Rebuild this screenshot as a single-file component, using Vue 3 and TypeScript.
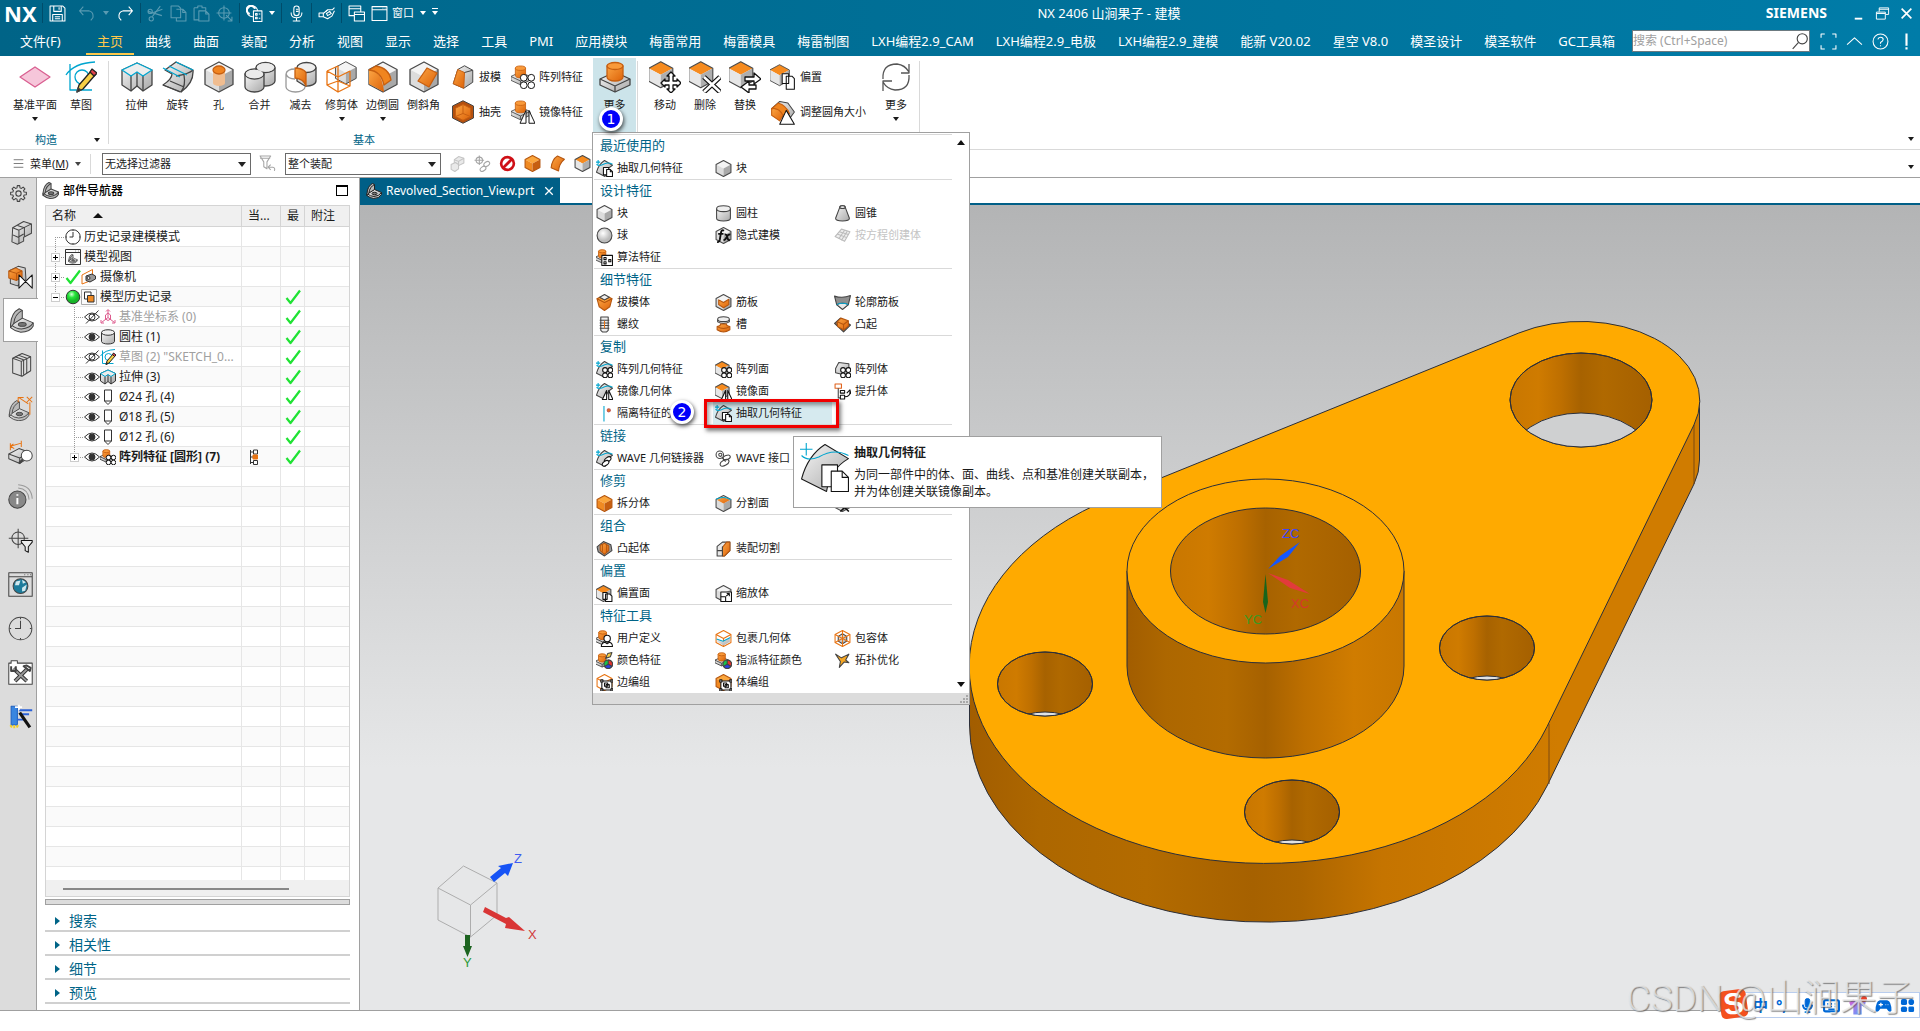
<script setup lang="ts">
import { h, ref } from 'vue'

/* ---------- icon drawing helpers (32 x 32 grid) ---------- */
const O = 'url(#orange)'
const G = 'url(#grey)'
const cube = (top: string, left: string, right: string, line = '#4a4a4a'): string =>
  `<g stroke="none"><path d="M16 1 30 8.500 16 16 2 8.500Z" fill="${top}"/><path d="M2 8.500 16 16V31L2 23.500Z" fill="${left}"/><path d="M30 8.500 16 16V31L30 23.500Z" fill="${right}"/></g>` +
  `<path d="M16 1 30 8.500V23.500L16 31 2 23.500V8.500Z" stroke="${line}"/>`
const at = (x: number, y: number, k: number, body: string): string =>
  `<g transform="translate(${x} ${y}) scale(${k})">${body}</g>`
const greyCube = cube('#f4f4f4', '#dcdcdc', '#a9a9a9')
const topCube = cube('#f68b1f', '#e6e6e6', '#aeaeae')
const solidCube = cube('#fba63c', '#f08a22', '#c75f10', '#b5560f')
const pad =
  `<path d="M1 18 16 11 31 18V24L16 31 1 24Z" fill="${G}"/><path d="M1 18 16 25 31 18M16 25V31"/>` +
  `<path d="M8 5V16a8 4 0 0 0 16 0V5Z" fill="${O}" stroke="#c75f10"/><ellipse cx="16" cy="5" rx="8" ry="3.500" fill="#f99a3a" stroke="#c75f10"/>`
const surf =
  `<path d="M1 23Q5 8 16 1L31 10Q19 17 17 31Z" fill="${G}"/><path d="M1 8Q5 12 12 9 22 3 31 8" stroke="#00a5cf"/><path d="M4 0V8M0 4H8" stroke="#00a5cf"/>`
const four =
  '<g fill="#fff" stroke="#111"><circle cx="17" cy="17" r="4.500"/><circle cx="27" cy="17" r="4.500"/><circle cx="17" cy="27" r="4.500"/><circle cx="27" cy="27" r="4.500"/></g>'
const mirror = '<path d="M20 14V31H12ZM24 14V31H32Z" fill="#fff" stroke="#111"/>'
const pages = '<path d="M14 14h10v14h-10z" fill="#fff" stroke="#111"/><path d="M20 18h7l4 4v9H20Z" fill="#fff" stroke="#111"/><path d="M27 18v4h4" stroke="#111"/>'
const cyl = (f: string): string => `<path d="M3 7V25a13 5 0 0 0 26 0V7" fill="${f}"/><ellipse cx="16" cy="7" rx="13" ry="5.500" fill="#eee"/>`
const bracket =
  `<path d="M2 21 17 13 31 19V23Q27 31 15 31 8 30 2 25Z" fill="${G}"/><path d="M2 21Q9 27 16 27 27 26 31 19"/>` +
  `<ellipse cx="17" cy="21" rx="5" ry="2.500" fill="#777"/><path d="M2 21Q3 6 13 1L17 3V13L6 20 2 25Z" fill="#b9b9b9"/><path d="M17 3Q7 8 6 20"/>`
const rgb = '<circle cx="23" cy="23" r="8" fill="#19c24a"/><path d="M23 23V15A8 8 0 0 1 30 27Z" fill="#e5322d"/><path d="M23 23 30 27A8 8 0 0 1 16 27Z" fill="#2b3fe0"/>'
const hexWire = `<path d="M16 1 30 8.500V23.500L16 31 2 23.500V8.500Z" stroke="#e87311"/><path d="M2 8.500 16 16 30 8.500M16 16V31" stroke="#e87311"/>`
const handles =
  '<path d="M11 13H30V30H11Z" fill="#fff" stroke="#111"/><path d="M9 11H13V15H9ZM28 11H32V15H28ZM9 28H13V32H9ZM28 28H32V32H28ZM16 17H22V23H16ZM19 20H25V26H19Z" stroke="#111" fill="#fff"/>'
const sketch =
  '<path d="M5 3V29H27M1 14Q9 2 30 1" stroke="#00a5cf"/><circle cx="17" cy="16" r="7" stroke="#00a5cf"/><path d="M12 31 14 24 27 9l4 4L18 28Z" fill="#f7cf46" stroke="#222"/><path d="M25 11l2-3 5 4-3 3z" fill="#e0434a" stroke="#222"/><path d="M12 31l1-4 3 2z" fill="#222"/>'
const extrude = `<path d="M1 9 16 2 31 9V24L22 30 16 25 10 30 1 24Z" fill="${G}"/><path d="M16 11V25M10 15V30M22 15V30"/><path d="M1 9 16 2 31 9 22 15 16 11 10 15Z" fill="#ededed" stroke="#00a5cf"/>`

/* Cog outline with eight teeth. */
const cog = (() => {
  const pts: string[] = []
  for (let i = 0; i < 8; i++) {
    for (const [d, r] of [[-15, 11], [-9, 15], [9, 15], [15, 11]]) {
      const a = ((i * 45 + d) * Math.PI) / 180
      pts.push(`${(16 + r * Math.cos(a)).toFixed(1)} ${(16 + r * Math.sin(a)).toFixed(1)}`)
    }
  }
  return `<path d="M${pts.join('L')}Z"/><circle cx="16" cy="16" r="5"/>`
})()

const glyphs: Record<string, string> = {
  save: '<path d="M2 2H26L30 6V30H2ZM9 2V12H23V2M19 4V9M7 30V18H25V30M11 22H21M11 26H21"/>',
  undo: '<path d="M10 3 3 11 10 19M3 11H20Q30 13 28 24L24 29"/>',
  redo: '<path d="M22 3 29 11 22 19M29 11H12Q2 13 4 24L8 29"/>',
  cut: '<path d="M25 2 10 22M2 12 28 20"/><circle cx="8" cy="26" r="4"/><circle cx="6" cy="12" r="4"/><path d="M12 14 29 8"/>',
  copy: '<path d="M2 2H16L20 6V24H2ZM12 8H24L30 14V30H12V24M24 8V14H30"/>',
  paste: '<path d="M2 5H9V2H17V5H24V10M2 5V28H11M11 11H24L30 17V30H11ZM24 11V17H30"/>',
  target: '<circle cx="15" cy="15" r="10"/><path d="M15 1V29M1 15H29M19 19 30 30M30 22V30H22"/>',
  finder: '<circle cx="12" cy="12" r="10"/><path d="M7 17A8 8 0 1 1 17 7" stroke-width="4"/><path d="M14 11H30V31H14Z" fill="#00648a"/><path d="M18 16H21V19H18ZM18 23H21V26H18ZM24 17H27M24 25H27"/>',
  mic: '<rect x="11" y="2" width="10" height="18" rx="5"/><path d="M6 14V17Q7 24 16 24T26 17V14M16 24V30M9 30H23M15 8H20M15 12H20"/>',
  hand: '<path d="M2 15H10V22H2ZM10 16 18 9H27L31 5M10 22 18 26 26 21 31 11M16 16 22 12 25 16 18 20Z"/><path d="M18 9 14 13"/>',
  windows: '<path d="M2 2H24V20H2ZM2 7H24"/><path d="M12 13H31V30H12ZM12 18H31" fill="#00668a"/>',
  window: '<path d="M2 3H30V29H2ZM2 9H30M22 6H23M26 6H27"/>',
  full: '<path d="M2 9V2H9M23 2H30V9M30 23V30H23M9 30H2V23"/>',
  up: '<path d="M2 22 16 9 30 22"/>',
  help: '<circle cx="16" cy="16" r="14"/><path d="M11 12Q12 8 16 8 21 8 21 12 21 15 16 18V20M16 23V25"/>',
  bang: '<path d="M16 1V24M16 27V31" stroke-width="4"/>',
  lens: '<circle cx="20" cy="12" r="9"/><path d="M13 19 3 30"/>',
  min: '<path d="M8 27H24" stroke-width="4"/>',
  restore: '<path d="M9 12V4H29V18H23M3 13H22V28H3ZM9 7H29M3 16H22" />',
  close: '<path d="M4 4 28 28M28 4 4 28" stroke-width="4"/>',
  plane: '<path d="M16 6 31 16 16 26 1 16Z" fill="#f6c6da" stroke="#d95f90"/>',
  sketch,
  extrude,
  revolve: `<path d="M3 9 14 1 31 9Q32 22 19 31L1 24Q10 18 10 13Z" fill="${G}"/><path d="M31 9Q27 13 14 15M19 31Q24 25 22 14M1 24 18 31M8 20 22 26"/><path d="M1 7 18 16M14 1 31 9M7 5 25 14" stroke="#00a5cf"/>`,
  hole: greyCube + `<path d="M10 10V22a6 3 0 0 0 12 0V10" fill="#f0bd90" stroke="none"/><ellipse cx="16" cy="9" rx="6" ry="4" fill="#f08421" stroke="#c75f10"/>`,
  unite: `<path d="M12 7V20a9.500 5 0 0 0 19 0V7Z" fill="${G}"/><path d="M1 13V26a9.500 5 0 0 0 19 0V13Z" fill="${G}"/><ellipse cx="21.500" cy="6.500" rx="9.500" ry="5"/><ellipse cx="10.500" cy="13" rx="9.500" ry="5"/><g stroke="none" fill="#eaeaea"><ellipse cx="21.500" cy="6.500" rx="8.800" ry="4.300"/><ellipse cx="10.500" cy="13" rx="8.800" ry="4.300"/></g>`,
  subtract: `<path d="M12 7V20L20 25a9.500 5 0 0 0 11-5V7Z" fill="${G}"/><ellipse cx="21.500" cy="6.500" rx="9.500" ry="5" fill="#eee"/><path d="M10 7Q22 8 21 14V25Q19 18 10 17Z" fill="${O}" stroke="#c75f10"/><path d="M1 13V26a9.500 5 0 0 0 19 0M1 13Q2 8 10 8M1 13Q3 18 10 18" stroke="#999"/>`,
  trim: at(8, 0, 0.74, greyCube) + `<path d="M1 10 12 5M1 10 12 16 24 10M1 10V24L12 31V16M12 31 24 25V10M12 5V20L1 24M12 20 24 25" stroke="#e87311"/>`,
  edge: greyCube + `<path d="M2 9Q15 9 17 31L2 23Z" fill="${O}" stroke="none"/><path d="M2 9 9 5Q22 7 24 19L17 24Q14 10 2 9Z" fill="#f0851f" stroke="#c75f10"/><path d="M2 9V17L15 24" stroke="none"/>`,
  chamfer: greyCube + `<path d="M10 20 19 7 29 12 21 26Z" fill="${O}" stroke="#c75f10"/>`,
  draft: `<path d="M9 6 18 1 29 7V23L17 31 3 25Z" fill="${G}"/><path d="M9 6 18 10 17 31 3 25Z" fill="${O}" stroke="#c75f10"/><path d="M18 10 29 7"/>`,
  shell: `<path d="M16 1 30 8V24L16 31 2 24V8Z" fill="#b5500e"/><path d="M16 6 26 11V22L16 27 6 22V11Z" fill="${O}" stroke="#c75f10"/><path d="M16 6V18L26 22M16 18 6 22" stroke="#c75f10"/>`,
  pattern: at(-1, 0, 0.85, pad) + four,
  mirrorFeat: at(-1, 0, 0.85, pad) + mirror,
  pad,
  move: at(-2, 0, 0.86, topCube) + '<path d="M22 11 26 15H24V20H28V18L32 22 28 26V24H24V28H26L22 32 18 28H20V24H16V26L12 22 16 18V20H20V15H18Z" fill="#fff" stroke="#111"/>',
  del: at(-2, 0, 0.86, topCube) + '<path d="M15 16 31 31M31 16 15 31" stroke="#111" stroke-width="5"/><path d="M15 16 31 31M31 16 15 31" stroke="#fff" stroke-width="2.500"/>',
  replace: at(-2, 0, 0.86, topCube) + '<path d="M16 16H25V12L32 18 25 23V20H16ZM27 24H20V20L12 26 20 32V28H27Z" fill="#fff" stroke="#111"/>',
  offset: at(-2, 0, 0.86, topCube) + '<path d="M15 12h8v12h-8zM20 15h7l3 3v13H20z" fill="#fff" stroke="#111"/>',
  resize: `<path d="M2 12 12 3 22 5 30 16 22 27Z" fill="${G}"/><path d="M2 12Q11 10 16 20L12 27 2 20Z" fill="${O}" stroke="#c75f10"/><path d="M2 12 10 5Q20 8 24 18L16 20Q11 10 2 12Z" fill="#f0851f" stroke="#c75f10"/><path d="M20 14 30 31H12Z" fill="#fff" stroke="#111"/>`,
  cycle: '<path d="M3 18Q2 3 17 3 25 4 29 11M29 3V12H21M29 14Q30 29 15 29 7 28 3 21M3 30V20H12" stroke="#555"/>',
  block: greyCube,
  cylinder: cyl(G),
  cone: `<path d="M11 4 3 25a13 5 0 0 0 26 0L21 4a5 3 0 0 0-10 0Z" fill="${G}"/><ellipse cx="16" cy="4" rx="5" ry="2.500" fill="#eee"/>`,
  sphere: `<circle cx="16" cy="16" r="14" fill="url(#ball)"/>`,
  implicit: greyCube + '<path d="M17 7Q12 4 11 12L9 24Q8 29 4 28M6 13H16M18 14Q22 13 23 19T28 25M29 14Q24 14 22 19T16 25" stroke="#111" stroke-width="3.500"/>',
  byEq: '<g stroke="#bbb"><path d="M2 18 14 4 30 9 20 27Z" fill="#eee"/><path d="M6 13 24 20M10 9 27 14M9 22 20 6M14 25 25 8"/></g>',
  algo: at(-2, 0, 0.85, pad) + '<path d="M11 12H31V31H11Z" fill="#fff" stroke="#111"/><path d="M15 16H19V20H15ZM15 24H19V28H15ZM24 20H28V24H24Z" stroke="#111"/>',
  draftBody: `<path d="M2 9 16 15 30 9 26 24 16 31 6 24Z" fill="${O}" stroke="#b5560f"/><path d="M2 9 7 6 16 11 25 6 30 9 16 16Z" fill="#f9a13a" stroke="#b5560f"/><path d="M7 6 16 1 25 6 16 11Z" fill="#eee"/>`,
  rib: greyCube + `<path d="M7 11 16 16 26 10V20L16 26 7 20Z" fill="${O}" stroke="#b5560f"/>`,
  profileRib: `<path d="M1 4Q16 9 31 3L27 20 16 29 5 20Z" fill="#8e8e8e"/><path d="M5 20 16 29 27 20Q16 15 5 20Z" fill="#e8e8e8"/><path d="M5 20Q16 15 27 20" stroke="#00a5cf"/>`,
  thread: `<path d="M9 2H23V27L20 30H12L9 27Z" fill="#eee"/><path d="M7 8H25M7 13H25M7 18H25M7 23H25"/><path d="M16 9V23" stroke="#e87311"/>`,
  groove: `<path d="M5 6V11Q16 17 27 11V6" fill="${G}"/><ellipse cx="16" cy="6" rx="11" ry="4.500" fill="#eee"/><path d="M10 15Q12 18 4 20V26Q16 34 28 26V20Q20 18 22 15Z" fill="${O}" stroke="#b5560f"/><path d="M4 20Q16 27 28 20" stroke="#b5560f"/>`,
  emboss: `<path d="M1 14 12 4 31 17 18 30Z" fill="#9a6a45"/><path d="M6 11 13 4 27 9V19L18 26 7 20Z" fill="${O}" stroke="#b5560f"/><path d="M6 11 18 16 27 9M18 16V26" stroke="#b5560f"/>`,
  patGeom: surf + four,
  patFace: at(-2, 0, 0.95, topCube) + four,
  patBody: `<path d="M3 14 9 3 28 5V20L22 27 3 22Z" fill="${G}"/>` + four,
  mirGeom: surf + mirror,
  mirFace: at(-2, 0, 0.95, topCube) + mirror,
  promote: '<path d="M2 2H14V10H2Z" fill="#fff" stroke="#e0611a"/><path d="M8 10V28H11"/><path d="M12 14H20V19H12ZM12 23H20V30H12ZM20 26Q31 26 30 15M24 19 30 13 32 21" fill="#fff" stroke="#111"/>',
  isolate: '<path d="M15 2V31" stroke="#00a5cf"/><circle cx="24" cy="10" r="3" fill="#e87311" stroke="#b55"/>',
  extract: surf + pages,
  wave: surf + '<g stroke="#111" fill="#fff"><ellipse cx="22" cy="18" rx="7" ry="4" transform="rotate(-35 22 18)"/><ellipse cx="18" cy="25" rx="7" ry="4" transform="rotate(-35 18 25)"/></g>',
  waveIf: '<circle cx="9" cy="9" r="7"/><circle cx="10" cy="9" r="3"/><ellipse cx="22" cy="14" rx="7" ry="4" transform="rotate(-20 22 14)"/><ellipse cx="18" cy="24" rx="9" ry="5" transform="rotate(-30 18 24)"/><path d="M13 14 20 22"/>',
  split: solidCube,
  divide: greyCube + `<path d="M3 9 16 4 29 9 16 16Z" fill="${O}" stroke="none"/><path d="M2 8Q16 1 30 9" stroke="#00a5cf"/>`,
  unknown: greyCube + '<path d="M12 16 28 31M28 16 12 31" stroke="#111" stroke-width="3"/>',
  embBody: `<path d="M2 13 14 3 28 9 30 20 16 30 4 22Z" fill="#999"/><path d="M8 10 16 6 24 11V20L16 27 8 20Z" fill="${O}" stroke="#b5560f"/><path d="M12 8V22M20 9V23" stroke="#b5560f"/>`,
  asmCut: `<path d="M4 12 14 4H28V20L18 30H4Z" fill="#e8e8e8"/><path d="M14 14 22 4H28V20L18 30H14Z" fill="${O}" stroke="#b5560f"/><path d="M14 12V30M4 20H14"/>`,
  offFace: at(-2, 0, 1, topCube) + '<path d="M13 14H21V27H13ZM18 17H26L30 21V31H18Z" fill="#fff" stroke="#111"/>',
  scale: greyCube + '<path d="M11 13H31V31H11Z" fill="#fff" stroke="#111"/><path d="M11 22H20V31M21 21 27 16M22 16H27V21" stroke="#111"/>',
  user: at(-2, 0, 0.9, pad) + '<circle cx="21" cy="16" r="6" fill="#fff" stroke="#111"/><path d="M10 31Q10 24 17 23L21 26 25 23Q31 24 31 31Z" fill="#fff" stroke="#111"/>',
  wrap: hexWire + `<path d="M4 17 14 22 28 14V22L16 29 4 22Z" fill="${G}" stroke="none"/><path d="M3 17 15 21 29 14" stroke="#00a5cf"/>`,
  bound: `<path d="M16 7 24 12V21L16 26 8 21V12Z" fill="${G}"/>` + hexWire + '<path d="M2 23.500 16 16 30 23.500M16 1V16" stroke="#e87311"/>',
  color: at(-2, 2, 0.85, pad) + rgb + '<path d="M18 12 22 3 30 1 27 9Z" fill="#f7cf46"/>',
  assign: at(-1, 0, 0.85, pad) + rgb,
  topo: '<path d="M3 4 14 11 28 4 22 15 28 20 19 19 10 29 12 18Z" fill="#f5a623"/>',
  edgeGrp: hexWire + handles,
  bodyGrp: solidCube + handles,
  bars: '<path d="M2 5H30M2 16H30M2 27H30"/>',
  funnel: '<g stroke="#a5a5a5"><path d="M2 2H22L15 13V26L9 22V13ZM2 6H21"/><path d="M18 23H26Q31 24 29 30M22 18 17 23 22 28"/></g>',
  stack: '<g stroke="#c4c4c4" fill="#e9e9e9"><path d="M10 9 18 3 28 6V15L18 20 10 16Z"/><path d="M4 18 12 14 18 18V26L11 31 4 27Z"/><path d="M10 9 18 12 28 6M18 12V20"/></g>',
  chainT: '<g stroke="#a5a5a5"><circle cx="10" cy="10" r="6"/><path d="M10 1V19M1 10H19"/><ellipse cx="24" cy="17" rx="6" ry="4" transform="rotate(-35 24 17)"/><ellipse cx="17" cy="26" rx="6" ry="4" transform="rotate(-35 17 26)"/></g>',
  forbid: '<circle cx="16" cy="16" r="12" stroke="#cf1016" stroke-width="5" fill="#fff"/><path d="M8 24 24 8" stroke="#cf1016" stroke-width="5"/>',
  orangeCube: solidCube,
  orangeSurf: `<path d="M4 24Q6 8 16 2L29 8Q19 16 18 30Z" fill="${O}" stroke="#b5560f"/>`,
  topFace: topCube,
  gear: cog,
  assembly: `<path d="M6 10 20 2 30 5V17L20 22V27L12 31 5 28Z" fill="${G}"/><path d="M6 10 14 13 30 5M14 13V30M6 19 13 22 20 18M21 9V21M12 7 21 10"/>`,
  constraint: `<path d="M3 8 13 3 22 5 23 20 12 28 3 25Z" fill="${G}"/><path d="M1 9 10 5 18 9V17L11 21 1 18Z" fill="${O}" stroke="#b5560f"/><path d="M1 9 11 12 18 9M11 12V21" stroke="#b5560f"/><path d="M14 14V31L31 14V31Z" fill="#fff" stroke="#111"/>`,
  bracket,
  books: `<path d="M6 8 18 2 29 6V24L18 31 6 27Z" fill="#ddd"/><path d="M6 8 17 12 29 6M17 12V31M9 6 20 10M13 4 24 8M20 10V29M24 8V27"/>`,
  pmi: at(0, 5, 0.86, bracket) + '<path d="M14 2 26 10M28 8V24M24 1 31 8M31 1 24 8M13 8V2H20" stroke="#e87311"/>',
  measure: `<path d="M1 18 14 11 28 16V22L15 30 1 24Z" fill="${G}"/><path d="M1 18 15 23 28 16M15 23V30"/><path d="M3 4V13M17 1V9M3 8 17 4M7 5 3 8 8 11" stroke="#e87311"/><circle cx="24" cy="20" r="7" fill="#fff"/><path d="M19 25 14 30" stroke-width="3"/>`,
  info: '<circle cx="12" cy="20" r="11" fill="#888"/><path d="M12 18V26M12 13V15" stroke="#fff" stroke-width="2.500"/><path d="M13 5Q26 6 27 20M13 1Q30 2 31 19" stroke="#999"/>',
  filter: '<circle cx="13" cy="13" r="8"/><path d="M13 1V26M1 13H26M13 9V17"/><path d="M17 16H31V18L26 24V31L22 29V24L17 18Z" fill="#eee" stroke="#111"/>',
  web: '<path d="M1 1H31V31H1ZM1 6H31M21 3.500H22M25 3.500H26M28.500 3.500H29.500"/><circle cx="16" cy="18" r="9.500" fill="#1c7c9c"/><path d="M10 12 16 11 14 17 9 17ZM18 20 24 16 22 24 18 25ZM18 10 23 13 19 15Z" fill="#cfe8ee" stroke="none"/>',
  clock: '<circle cx="16" cy="16" r="14.500"/><path d="M16 6V16H9M16 2V4M16 28V30M2 16H4M28 16H30"/>',
  tools: '<path d="M1 4H4V1H12V4H31V31H1Z" fill="#fff"/><path d="M9 27 25 11M7 11 24 27" stroke="#333" stroke-width="5"/><path d="M9 27 25 11M7 11 24 27" stroke="#999" stroke-width="2.500"/><path d="M4 8V14H10V8M20 8 28 14 29 10 24 7Z" stroke-width="2.500"/>',
  wand: '<path d="M4 3H12V27H4Z" fill="#3a86e0" stroke="#1d5fc0"/><path d="M14 8H31M16 13H27M12 20H20" stroke="#2b62d8" stroke-width="2.500"/><path d="M15 11 28 30" stroke="#111" stroke-width="4"/><path d="M14 1V8M9 4H18" stroke="#fff" stroke-width="2"/><path d="M3 27 5 30M8 27V31M13 27 11 30" stroke="#f2cf2a" stroke-width="2.500"/>',
  view: `<path d="M1 1H31V31H1ZM1 7H31M21 4H22M26 4H27"/>` + at(6, 10, 0.6, bracket),
  tick: '<path d="M3 18 11 28 30 3" stroke="#1fe234" stroke-width="4.500"/>',
  camera: '<path d="M2 12 23 1V22L2 30Z" stroke="#e87311"/><path d="M10 14 22 10 29 14V20L18 26 10 23Z" fill="#999"/><circle cx="15" cy="18" r="3" fill="#ddd"/>',
  ball: '<circle cx="16" cy="16" r="13.500" fill="url(#green)"/>',
  history: '<path d="M1 1H31V31H1Z" stroke="#aaa"/><path d="M7 6H20V20H7Z" fill="#fff"/><path d="M13 13H26V26H13Z" fill="#f08a22"/>',
  eye: '<path d="M1 16Q16 0 31 16 16 32 1 16Z"/><circle cx="16" cy="16" r="6" fill="#333"/>',
  eyeOff: '<path d="M1 16Q16 0 31 16 16 32 1 16Z"/><circle cx="16" cy="16" r="6"/><path d="M4 29 29 3"/>',
  csys: '<g stroke="#dd5b8d"><path d="M16 17V2M16 17 3 27M16 17 29 27"/><path d="M11 12 16 8 21 12V20L16 23 11 20ZM12 5 16 1 20 5M2 22V28H8M24 28H30V22"/></g>',
  drill: '<path d="M9 2H23V24L16 31 9 24ZM9 24H23" fill="#fff"/>',
  treeMark: '<path d="M9 2V30M9 6H15M9 16H15M9 27H15M15 2H23V10H15ZM15 23H23V31H15Z"/><path d="M14 12H23V20H14Z" fill="#e87311" stroke="#e87311"/>',
  imeMic: '<rect x="11" y="1" width="10" height="19" rx="5" fill="#0068d6"/><path d="M6 14Q7 24 16 24T26 14M16 24V30M10 30H22" stroke-width="4"/>',
  imeKey: '<rect x="2" y="6" width="28" height="21" rx="3" stroke-width="4"/><path d="M8 13H10M15 13H17M22 13H24M8 18H10M15 18H17M22 18H24M10 23H22" stroke-width="3"/>',
  imeShirt: '<path d="M9 6 2 11 5 18 9 16V31H23V16L27 18 30 11 23 6 16 10Z" fill="url(#shirt)" stroke="none"/><circle cx="27" cy="5" r="5" fill="#e8402a" stroke="none"/>',
  imePad: '<path d="M9 6H23Q31 8 31 26 27 31 22 22H10Q5 31 1 26 1 8 9 6Z" fill="#0068d6" stroke="none"/><path d="M11 11V18M7 14.500H15M20 14.500H21M24 14.500H25" stroke="#fff" stroke-width="2.500"/>',
  imeGrid: '<g fill="#0068d6" stroke="none"><rect x="2" y="2" width="13" height="13" rx="4"/><rect x="18" y="2" width="12" height="13" rx="6"/><rect x="2" y="18" width="13" height="12" rx="4"/><rect x="18" y="18" width="12" height="12" rx="3"/></g>',
}

/* Draws one glyph; the line gets relatively heavier in small sizes. */
const Ic = (p: { n: string; s: number }) =>
  h('svg', {
    class: 'ic',
    viewBox: '0 0 32 32',
    width: p.s,
    height: p.s,
    fill: 'none',
    stroke: 'currentColor',
    'stroke-width': p.s >= 40 ? 0.7 : p.s >= 24 ? 1.3 : 2,
    'aria-hidden': 'true',
    innerHTML: glyphs[p.n],
  })
Ic.props = ['n', 's']

const tabs: string[] = [
  '主页', '曲线', '曲面', '装配', '分析', '视图', '显示', '选择', '工具', 'PMI', '应用模块', '梅雷常用', '梅雷模具', '梅雷制图',
  'LXH编程2.9_CAM', 'LXH编程2.9_电极', 'LXH编程2.9_建模', '能新 V20.02', '星空 V8.0', '模圣设计', '模圣软件', 'GC工具箱',
]

interface Tool { n: string; t: string; menu?: boolean }
const basic: Tool[] = [
  { n: 'extrude', t: '拉伸' }, { n: 'revolve', t: '旋转' }, { n: 'hole', t: '孔' }, { n: 'unite', t: '合并' },
  { n: 'subtract', t: '减去' }, { n: 'trim', t: '修剪体', menu: true }, { n: 'edge', t: '边倒圆', menu: true }, { n: 'chamfer', t: '倒斜角' },
]
const sync: Tool[] = [{ n: 'move', t: '移动' }, { n: 'del', t: '删除' }, { n: 'replace', t: '替换' }]

const sideBar: string[] = ['assembly', 'constraint', 'bracket', 'books', 'pmi', 'measure', 'info', 'filter', 'web', 'clock', 'tools', 'wand']

interface Node { t: string; icons: string[]; child?: boolean; box?: '+' | '-'; off?: boolean; bold?: boolean; ok?: boolean; first?: boolean; last?: boolean }
const nodes: Node[] = [
  { t: '历史记录建模模式', icons: ['clock'], first: true },
  { t: '模型视图', icons: ['view'], box: '+' },
  { t: '摄像机', icons: ['tick', 'camera'], box: '+' },
  { t: '模型历史记录', icons: ['ball', 'history'], box: '-', ok: true, last: true },
  { t: '基准坐标系 (0)', icons: ['eyeOff', 'csys'], child: true, off: true, ok: true },
  { t: '圆柱 (1)', icons: ['eye', 'cylinder'], child: true, ok: true },
  { t: '草图 (2) "SKETCH_0...', icons: ['eyeOff', 'sketch'], child: true, off: true, ok: true },
  { t: '拉伸 (3)', icons: ['eye', 'extrude'], child: true, ok: true },
  { t: 'Ø24 孔 (4)', icons: ['eye', 'drill'], child: true, ok: true },
  { t: 'Ø18 孔 (5)', icons: ['eye', 'drill'], child: true, ok: true },
  { t: 'Ø12 孔 (6)', icons: ['eye', 'drill'], child: true, ok: true },
  { t: '阵列特征 [圆形] (7)', icons: ['eye', 'pattern'], child: true, ok: true, bold: true, box: '+', last: true },
]
const blanks = 22

interface Item { n: string; t: string; off?: boolean; hot?: boolean }
const groups: { title: string; items: Item[] }[] = [
  { title: '最近使用的', items: [{ n: 'extract', t: '抽取几何特征' }, { n: 'block', t: '块' }] },
  {
    title: '设计特征',
    items: [
      { n: 'block', t: '块' }, { n: 'cylinder', t: '圆柱' }, { n: 'cone', t: '圆锥' }, { n: 'sphere', t: '球' },
      { n: 'implicit', t: '隐式建模' }, { n: 'byEq', t: '按方程创建体', off: true }, { n: 'algo', t: '算法特征' },
    ],
  },
  {
    title: '细节特征',
    items: [
      { n: 'draftBody', t: '拔模体' }, { n: 'rib', t: '筋板' }, { n: 'profileRib', t: '轮廓筋板' },
      { n: 'thread', t: '螺纹' }, { n: 'groove', t: '槽' }, { n: 'emboss', t: '凸起' },
    ],
  },
  {
    title: '复制',
    items: [
      { n: 'patGeom', t: '阵列几何特征' }, { n: 'patFace', t: '阵列面' }, { n: 'patBody', t: '阵列体' },
      { n: 'mirGeom', t: '镜像几何体' }, { n: 'mirFace', t: '镜像面' }, { n: 'promote', t: '提升体' },
      { n: 'isolate', t: '隔离特征的...' }, { n: 'extract', t: '抽取几何特征', hot: true },
    ],
  },
  { title: '链接', items: [{ n: 'wave', t: 'WAVE 几何链接器' }, { n: 'waveIf', t: 'WAVE 接口' }] },
  { title: '修剪', items: [{ n: 'split', t: '拆分体' }, { n: 'divide', t: '分割面' }, { n: 'unknown', t: '' }] },
  { title: '组合', items: [{ n: 'embBody', t: '凸起体' }, { n: 'asmCut', t: '装配切割' }] },
  { title: '偏置', items: [{ n: 'offFace', t: '偏置面' }, { n: 'scale', t: '缩放体' }] },
  {
    title: '特征工具',
    items: [
      { n: 'user', t: '用户定义' }, { n: 'wrap', t: '包裹几何体' }, { n: 'bound', t: '包容体' },
      { n: 'color', t: '颜色特征' }, { n: 'assign', t: '指派特征颜色' }, { n: 'topo', t: '拓扑优化' },
      { n: 'edgeGrp', t: '边编组' }, { n: 'bodyGrp', t: '体编组' },
    ],
  },
]

const sections: string[] = ['搜索', '相关性', '细节', '预览']

/* Small through holes of the flange: centre points on the upper face. */
const holes = [
  { id: 'h1', x: 1045, y: 684 },
  { id: 'h2', x: 1487, y: 648 },
  { id: 'h3', x: 1292, y: 812 },
]

const query = ref('')
const filter = ref('无选择过滤器')
const scope = ref('整个装配')
</script>

<template>
  <div class="app">
    <svg class="defs" aria-hidden="true">
      <defs>
        <linearGradient id="orange" x1="0" y1="0" x2="1" y2="1"><stop offset="0" stop-color="#fba544" /><stop offset="1" stop-color="#dd6208" /></linearGradient>
        <linearGradient id="grey" x1="0" y1="0" x2="1" y2="1"><stop offset="0" stop-color="#f6f6f6" /><stop offset="1" stop-color="#a8a8a8" /></linearGradient>
        <radialGradient id="ball" cx=".4" cy=".35"><stop offset="0" stop-color="#fff" /><stop offset="1" stop-color="#bbb" /></radialGradient>
        <radialGradient id="green" cx=".4" cy=".3"><stop offset="0" stop-color="#d6ffd9" /><stop offset=".5" stop-color="#27e53b" /><stop offset="1" stop-color="#16b428" /></radialGradient>
        <linearGradient id="shirt" x1="0" y1="0" x2="1" y2="1"><stop offset="0" stop-color="#e05ad8" /><stop offset="1" stop-color="#4aa8ff" /></linearGradient>
      </defs>
    </svg>

    <header class="top">
      <div class="title-row">
        <strong class="nx">NX</strong>
        <i class="bar"></i>
        <button aria-label="保存"><Ic n="save" :s="17" /></button>
        <button class="dim undo" aria-label="撤销"><Ic n="undo" :s="17" /></button>
        <i class="caret dim spaced"></i>
        <button aria-label="重做"><Ic n="redo" :s="17" /></button>
        <i class="bar"></i>
        <button class="dim" aria-label="剪切"><Ic n="cut" :s="17" /></button>
        <button class="dim" aria-label="复制"><Ic n="copy" :s="17" /></button>
        <button class="dim" aria-label="粘贴"><Ic n="paste" :s="17" /></button>
        <button class="dim" aria-label="定位"><Ic n="target" :s="17" /></button>
        <i class="bar"></i>
        <button aria-label="命令查找"><Ic n="finder" :s="17" /></button>
        <i class="caret"></i>
        <i class="bar"></i>
        <button aria-label="语音"><Ic n="mic" :s="17" /></button>
        <i class="bar"></i>
        <button aria-label="触控"><Ic n="hand" :s="17" /></button>
        <i class="bar"></i>
        <button aria-label="切换窗口"><Ic n="windows" :s="17" /></button>
        <button class="win"><Ic n="window" :s="17" />窗口</button>
        <i class="caret"></i>
        <i class="caret lined"></i>
        <h1>NX 2406 山涧果子 - 建模</h1>
        <strong class="brand">SIEMENS</strong>
        <button class="wc" aria-label="最小化"><Ic n="min" :s="15" /></button>
        <button class="wc" aria-label="还原"><Ic n="restore" :s="15" /></button>
        <button class="wc" aria-label="关闭"><Ic n="close" :s="13" /></button>
      </div>
      <nav class="tabs">
        <a href="#" class="file">文件(F)</a>
        <a v-for="(t, i) in tabs" :key="t" href="#" :class="{ on: i === 0 }">{{ t }}</a>
        <div class="tab-end">
          <label class="search">
            <input v-model="query" type="text" placeholder="搜索 (Ctrl+Space)" aria-label="搜索" />
            <Ic n="lens" :s="18" />
          </label>
          <button aria-label="全屏"><Ic n="full" :s="17" /></button>
          <button aria-label="折叠"><Ic n="up" :s="17" /></button>
          <button aria-label="帮助"><Ic n="help" :s="17" /></button>
          <button aria-label="提示"><Ic n="bang" :s="17" /></button>
        </div>
      </nav>
    </header>

    <section class="ribbon">
      <div class="group g-datum">
        <div class="tools">
          <button class="big"><Ic n="plane" :s="32" /><span>基准平面</span><i class="caret"></i></button>
          <button class="big"><Ic n="sketch" :s="32" /><span>草图</span></button>
        </div>
        <div class="foot"><span>构造</span><i class="caret"></i></div>
      </div>
      <div class="group g-basic">
        <div class="tools">
          <button v-for="b in basic" :key="b.t" class="big"><Ic :n="b.n" :s="32" /><span>{{ b.t }}</span><i v-if="b.menu" class="caret"></i></button>
          <div class="pair short">
            <button><Ic n="draft" :s="24" />拔模</button>
            <button><Ic n="shell" :s="24" />抽壳</button>
          </div>
          <div class="pair">
            <button><Ic n="pattern" :s="24" />阵列特征</button>
            <button><Ic n="mirrorFeat" :s="24" />镜像特征</button>
          </div>
          <button class="big more"><Ic n="pad" :s="32" /><span>更多</span></button>
        </div>
        <div class="foot"><span>基本</span></div>
      </div>
      <div class="group g-sync">
        <div class="tools">
          <button v-for="b in sync" :key="b.t" class="big"><Ic :n="b.n" :s="32" /><span>{{ b.t }}</span></button>
          <div class="pair wide">
            <button><Ic n="offset" :s="26" />偏置</button>
            <button><Ic n="resize" :s="26" />调整圆角大小</button>
          </div>
          <button class="big"><Ic n="cycle" :s="32" /><span>更多</span><i class="caret"></i></button>
        </div>
      </div>
      <i class="caret edge"></i>
    </section>

    <section class="selbar">
      <button class="menu"><Ic n="bars" :s="11" /><span>菜单(<u>M</u>)</span><i class="caret"></i></button>
      <label class="sel"><select v-model="filter" aria-label="过滤器"><option>无选择过滤器</option></select></label>
      <button aria-label="重置过滤器"><Ic n="funnel" :s="17" /></button>
      <label class="sel"><select v-model="scope" aria-label="范围"><option>整个装配</option></select></label>
      <div class="picks">
        <button v-for="n in ['stack', 'chainT', 'forbid', 'orangeCube', 'orangeSurf', 'topFace']" :key="n" :aria-label="n"><Ic :n="n" :s="17" /></button>
      </div>
      <i class="caret edge"></i>
    </section>

    <main>
      <aside class="rail">
        <button class="gear" aria-label="设置"><Ic n="gear" :s="17" /></button>
        <button v-for="n in sideBar" :key="n" :class="{ on: n === 'bracket' }" :aria-label="n"><Ic :n="n" :s="25" /></button>
      </aside>

      <section class="panel">
        <div class="panel-title"><Ic n="bracket" :s="17" /><h2>部件导航器</h2><button aria-label="最大化"></button></div>
        <div class="tree">
          <table>
            <colgroup><col class="c1" /><col class="c2" /><col class="c3" /><col /></colgroup>
            <thead>
              <tr><th>名称 <i class="sort"></i></th><th>当...</th><th>最</th><th>附注</th></tr>
            </thead>
            <tbody>
              <tr v-for="n in nodes" :key="n.t">
                <td>
                  <div class="node" :class="{ off: n.off, bold: n.bold }">
                    <svg v-if="!n.child" width="19" height="20" class="lead">
                      <path :d="`M9 ${n.first ? 10 : 0}V${n.last ? 10 : 20}M9 10H19`" />
                      <path v-if="n.box" class="box" d="M5 6H13V14H5Z" />
                      <path v-if="n.box" class="sign" :d="n.box === '+' ? 'M7 10H12M9 8V13' : 'M7 10H12'" />
                    </svg>
                    <svg v-else width="38" height="20" class="lead">
                      <path :d="`M28 0V${n.last ? 10 : 20}M28 10H38`" />
                      <path v-if="n.box" class="box" d="M24 6H32V14H24Z" />
                      <path v-if="n.box" class="sign" d="M26 10H31M28 8V13" />
                    </svg>
                    <Ic v-for="k in n.icons" :key="k" :n="k" :s="16" />
                    <span>{{ n.t }}</span>
                  </div>
                </td>
                <td><Ic v-if="n.bold" n="treeMark" :s="16" /></td>
                <td><Ic v-if="n.ok" n="tick" :s="16" /></td>
                <td></td>
              </tr>
              <tr v-for="b in blanks" :key="b"><td></td><td></td><td></td><td></td></tr>
            </tbody>
          </table>
        </div>
        <div class="hscroll"><i></i></div>
        <div class="splitter"></div>
        <div class="sections">
          <button v-for="s in sections" :key="s"><i></i>{{ s }}</button>
        </div>
      </section>

      <section class="work">
        <div class="doc-tabs">
          <div class="doc"><Ic n="bracket" :s="16" /><span>Revolved_Section_View.prt</span><button aria-label="关闭文件"><Ic n="close" :s="10" /></button></div>
        </div>
        <div class="canvas">
          <svg class="scene" viewBox="360 205 1560 805" preserveAspectRatio="xMaxYMin slice">
            <defs>
              <linearGradient id="rim" gradientUnits="userSpaceOnUse" x1="969" y1="0" x2="1560" y2="0">
                <stop offset="0" stop-color="#a25d00" /><stop offset=".12" stop-color="#ad6700" /><stop offset=".3" stop-color="#b36b00" /><stop offset=".48" stop-color="#a66100" /><stop offset=".56" stop-color="#ac6500" /><stop offset=".7" stop-color="#c57400" /><stop offset="1" stop-color="#d07c00" />
              </linearGradient>
              <linearGradient id="boss" x1="0" x2="1">
                <stop offset="0" stop-color="#a25d00" /><stop offset=".14" stop-color="#ad6700" /><stop offset=".36" stop-color="#b36b00" /><stop offset=".5" stop-color="#a66100" /><stop offset=".64" stop-color="#bd6f00" /><stop offset=".82" stop-color="#d07c00" /><stop offset="1" stop-color="#c87700" />
              </linearGradient>
              <linearGradient id="bore" x1="0" x2="1">
                <stop offset="0" stop-color="#c97700" /><stop offset=".2" stop-color="#cf7b00" /><stop offset=".36" stop-color="#be6f00" /><stop offset=".5" stop-color="#a76200" /><stop offset=".66" stop-color="#b06900" /><stop offset="1" stop-color="#a56000" />
              </linearGradient>
              <clipPath id="hEnd"><ellipse cx="1581" cy="400" rx="71" ry="47" /></clipPath>
              <clipPath v-for="o in holes" :id="o.id" :key="o.id"><ellipse :cx="o.x" :cy="o.y" rx="47.500" ry="32" /></clipPath>
            </defs>
            <g stroke="#2b2f3a" stroke-width="1">
              <path fill="url(#rim)" d="M969.500 666V725A296 197 0 0 0 1547 786L1694 484A119 79 0 0 0 1699.500 460V400L1500 500Z" />
              <path d="M1549 724V784M1694 425V484" stroke="#7c4a10" />
              <path fill="#ffaa00" d="M1111.600 498 1518.800 333A119 79 0 0 1 1693.900 425L1547 726.700A296 197 0 1 1 1111.600 498Z" />
              <ellipse cx="1581" cy="400" rx="71" ry="47" fill="url(#bore)" />
              <ellipse cx="1581" cy="460" rx="71" ry="47" fill="#cfd0d1" clip-path="url(#hEnd)" />
              <ellipse cx="1581" cy="400" rx="71" ry="47" fill="none" />
              <g v-for="o in holes" :key="o.id">
                <ellipse :cx="o.x" :cy="o.y" rx="47.500" ry="32" fill="url(#bore)" />
                <ellipse :cx="o.x" :cy="o.y + 60" rx="47.500" ry="32" fill="#e1e2e3" :clip-path="`url(#${o.id})`" />
                <ellipse :cx="o.x" :cy="o.y" rx="47.500" ry="32" fill="none" />
              </g>
              <path fill="url(#boss)" d="M1127 571V666A138.500 92 0 0 0 1404 666V571Z" />
              <ellipse cx="1265.500" cy="571" rx="138.500" ry="92" fill="#ffaa00" />
              <ellipse cx="1265.500" cy="571" rx="95" ry="63" fill="url(#bore)" />
            </g>
            <path d="M1268 569 1280 556 1300 542 1288 557Z" fill="#1557ff" />
            <path d="M1268 573 1288 580 1310 594 1290 588Z" fill="#e23b3b" />
            <path d="M1265.500 574 1268 602 1265.500 613 1263 602Z" fill="#17651b" />
            <g class="axis">
              <text x="1282" y="538" fill="#4048ff">ZC</text>
              <text x="1291" y="608" fill="#d6382c">XC</text>
              <text x="1244" y="624" fill="#3c9a20">YC</text>
              <text x="514" y="863" fill="#3f5cf0">Z</text>
              <text x="528" y="939" fill="#d13b3b">X</text>
              <text x="463" y="967" fill="#2c9a3a">Y</text>
            </g>
            <path d="M463.500 866 438 888 470.500 905 497 883ZM438 888V920L470.500 937V905M470.500 937 497 915V883" fill="none" stroke="#adadad" />
            <path d="M490 877 501 868 498 866 513 863 508 876 505 873 494 882Z" fill="#1653f5" />
            <path d="M485 907 506 918 509 917 525 931 505 928 506 924 483 912Z" fill="#d93636" />
            <path d="M465 935H470V946H472L467.500 957 463 946H465Z" fill="#1d6420" />
          </svg>
        </div>
      </section>
    </main>
    <footer></footer>

    <div class="popup">
      <div class="popup-body">
        <section v-for="g in groups" :key="g.title">
          <h3>{{ g.title }}</h3>
          <div class="items">
            <button v-for="i in g.items" :key="i.n" :class="{ off: i.off, hot: i.hot }"><Ic :n="i.n" :s="17" />{{ i.t }}</button>
          </div>
        </section>
      </div>
      <div class="popup-scroll"><i class="tri up"></i><i class="tri"></i></div>
      <div class="popup-foot"><svg width="8" height="8"><path d="M6 0h2v2H6zM3 3h2v2H3zM6 3h2v2H6zM0 6h2v2H0zM3 6h2v2H3zM6 6h2v2H6z" fill="#a8a8a8" /></svg></div>
    </div>
    <div class="frame"></div>
    <div class="tip">
      <Ic n="extract" :s="50" />
      <div><b>抽取几何特征</b><p>为同一部件中的体、面、曲线、点和基准创建关联副本，<br />并为体创建关联镜像副本。</p></div>
    </div>
    <span class="badge one">1</span>
    <span class="badge two">2</span>

    <div class="ime">
      <span class="sogou">S</span>
      <b>中</b><b class="punct">°,</b>
      <Ic n="imeMic" :s="15" /><Ic n="imeKey" :s="17" /><Ic n="imeShirt" :s="19" /><Ic n="imePad" :s="17" /><Ic n="imeGrid" :s="15" />
    </div>
    <div class="mark">CSDN @山涧果子</div>
  </div>
</template>

<style>
body {
  margin: 0;
  overflow: hidden;
}
</style>

<style scoped>
.app {
  position: relative;
  display: flex;
  flex-direction: column;
  height: 100vh;
  background: #fff;
  color: #1a1a1a;
  font: 11px/16px 'Noto Sans', 'Noto Sans CJK SC', sans-serif;
}
.app * {
  box-sizing: border-box;
}
.defs {
  position: absolute;
  width: 0;
  height: 0;
}
.ic {
  flex: none;
  display: block;
  stroke-linejoin: round;
}
button {
  display: flex;
  align-items: center;
  margin: 0;
  padding: 0;
  border: 0;
  background: none;
  color: #444;
  font: inherit;
  white-space: nowrap;
}
h1, h2, h3, p {
  margin: 0;
  font-weight: 400;
}
.caret {
  flex: none;
  width: 0;
  height: 0;
  border: 3px solid transparent;
  border-top: 4px solid currentColor;
  border-bottom: 0;
}

/* header */
.top {
  flex: none;
  height: 56px;
  background: linear-gradient(90deg, #006487, #007ca8);
  color: #fff;
}
.top button {
  color: #fff;
}
.title-row {
  display: flex;
  align-items: center;
  gap: 6px;
  height: 26px;
  padding: 0 5px 0 4px;
}
.nx {
  width: 32px;
  font: 700 22px/26px 'Noto Sans', sans-serif;
}
.bar {
  flex: none;
  width: 1px;
  height: 20px;
  background: #004c6a;
}
.undo {
  margin-left: 6px;
}
.spaced {
  margin: 0 2px;
}
.dim,
.top .dim {
  opacity: 0.35;
}
.win {
  gap: 4px;
  font-size: 11px;
}
.lined {
  position: relative;
}
.lined::before {
  content: '';
  position: absolute;
  left: -3px;
  top: -7px;
  width: 6px;
  height: 1px;
  background: #fff;
}
.title-row h1 {
  flex: 1;
  padding-left: 14px;
  text-align: center;
  font-size: 13px;
}
.brand {
  margin-right: 16px;
  font: 700 14px/16px 'Noto Sans', sans-serif;
}
.wc {
  width: 18px;
  justify-content: center;
}
.tabs {
  display: flex;
  height: 30px;
  font-size: 13px;
  line-height: 30px;
}
.tabs a {
  flex: none;
  height: 29px;
  padding: 0 11px;
  border-bottom: 2px solid transparent;
  color: #fff;
  text-decoration: none;
}
.tabs .file {
  width: 86px;
  padding-left: 20px;
}
.tabs .on {
  border-color: #ffc84a;
  color: #ffc84a;
}
.tab-end {
  display: flex;
  align-items: center;
  gap: 9px;
  margin-left: auto;
  padding-right: 5px;
}
.search {
  display: flex;
  align-items: center;
  width: 178px;
  height: 22px;
  margin-right: 1px;
  border: 1px solid #6c7a80;
  background: #fff;
  color: #444;
}
.search input {
  flex: 1;
  min-width: 0;
  padding: 0;
  border: 0;
  outline: 0;
  font: 12px/18px 'Noto Sans', 'Noto Sans CJK SC', sans-serif;
}
.search input::placeholder {
  color: #a0a0a0;
}

/* ribbon */
.ribbon {
  display: flex;
  flex: none;
  height: 94px;
  border-bottom: 1px solid #d9d9d9;
}
.group {
  position: relative;
  padding-top: 2px;
}
.group::after {
  content: '';
  position: absolute;
  right: 0;
  top: 5px;
  width: 1px;
  height: 83px;
  background: #d9d9d9;
}
.g-datum {
  width: 109px;
  padding-left: 12px;
}
.g-basic {
  width: 529px;
  padding-left: 7px;
}
.g-sync {
  width: 282px;
  padding-left: 7px;
}
.tools {
  display: flex;
  height: 74px;
}
.big {
  flex: none;
  flex-direction: column;
  width: 41px;
  height: 74px;
  padding-top: 3px;
}
.g-datum .big {
  width: 46px;
}
.g-sync .big {
  width: 40px;
}
.big span {
  line-height: 16px;
  margin-top: 4px;
  color: #1a1a1a;
}
.big .caret {
  margin-top: 4px;
  color: #1a1a1a;
}
.g-basic .more {
  width: 43px;
  margin-left: 3px;
  background: #cce4ea;
}
.pair {
  width: 80px;
  padding-left: 1px;
}
.pair.short {
  width: 66px;
  padding-left: 7px;
}
.pair.wide {
  width: 111px;
  padding-left: 5px;
}
.pair button {
  gap: 4px;
  height: 35px;
  padding-top: 2px;
  color: #1a1a1a;
}
.pair .ic {
  color: #444;
}
.foot {
  display: flex;
  align-items: center;
  justify-content: center;
  height: 16px;
  padding-right: 26px;
  color: #006487;
}
.g-datum .foot {
  justify-content: space-between;
  padding: 0 9px 0 23px;
}
.foot .caret {
  color: #1a1a1a;
}
.edge {
  margin: auto 6px 8px auto;
}

/* selection bar */
.selbar {
  display: flex;
  align-items: center;
  flex: none;
  height: 28px;
  border-bottom: 1px solid #a0a0a0;
}
.menu {
  gap: 6px;
  width: 91px;
  height: 20px;
  margin-right: 11px;
  padding-left: 13px;
  border-right: 1px solid #d9d9d9;
}
.menu span {
  color: #1a1a1a;
}
.sel {
  position: relative;
  width: 149px;
}
.sel + button {
  margin: 0 9px 0 8px;
}
.sel::after {
  content: '';
  position: absolute;
  right: 5px;
  top: 9px;
  border: 4px solid transparent;
  border-top: 5px solid #222;
  border-bottom: 0;
}
.sel select {
  display: block;
  width: 100%;
  height: 22px;
  padding: 0 2px;
  border: 1px solid #6a6a6a;
  border-radius: 0;
  background: #fff;
  color: #1a1a1a;
  font: inherit;
  appearance: none;
}
.sel ~ .sel {
  width: 156px;
}
.picks {
  display: flex;
  gap: 8px;
  padding-left: 8px;
}

/* main area */
main {
  display: flex;
  flex: 1;
  min-height: 0;
  border-bottom: 1px solid #a0a0a0;
}
footer {
  flex: none;
  height: 20px;
}
.rail {
  flex: none;
  width: 37px;
  border-right: 1px solid #a0a0a0;
  background: #dcdcdc;
}
.rail button {
  justify-content: center;
  width: 34px;
  height: 44px;
  margin-left: 3px;
}
.rail .gear {
  height: 32px;
  margin-left: 1px;
  padding-bottom: 2px;
}
.rail .on {
  width: 35px;
  border: 1px solid #a0a0a0;
  border-right: 0;
  background: #fff;
}
.panel {
  display: flex;
  flex-direction: column;
  flex: none;
  width: 323px;
  padding: 0 9px 6px 8px;
  border-right: 1px solid #a0a0a0;
  font-size: 12px;
}
.panel-title {
  display: flex;
  align-items: center;
  gap: 4px;
  flex: none;
  height: 27px;
  padding-bottom: 2px;
  color: #444;
}
.panel-title .ic {
  margin-left: -3px;
}
.panel-title h2 {
  flex: 1;
  color: #000;
  font-size: 12px;
  font-weight: 500;
}
.panel-title button {
  width: 12px;
  height: 11px;
  margin-right: 2px;
  border: 1px solid #000;
  border-top-width: 2px;
}
.tree {
  flex: 1;
  min-height: 0;
  overflow: hidden;
  border: 1px solid #d4d4d4;
  border-bottom: 0;
}
table {
  width: 100%;
  border-spacing: 0;
  table-layout: fixed;
}
.c1 {
  width: 196px;
}
.c2 {
  width: 39px;
}
.c3 {
  width: 24px;
}
th,
td {
  height: 20px;
  padding: 0;
  border-right: 1px solid #e6e6e6;
  border-bottom: 1px solid #e6e6e6;
  line-height: 18px;
  white-space: nowrap;
  vertical-align: middle;
}
th {
  height: 21px;
  padding-left: 6px;
  border-color: #d4d4d4;
  background: #f0f0f0;
  font-weight: 400;
  text-align: left;
}
th:last-child,
td:last-child {
  border-right: 0;
}
tbody tr:nth-child(even) td {
  background: #fafafa;
}
td .ic {
  margin-left: 4px;
  color: #333;
}
.sort {
  display: inline-block;
  margin: 0 0 2px 14px;
  border: 5px solid transparent;
  border-bottom: 5px solid #111;
  border-top: 0;
}
.node {
  display: flex;
  align-items: center;
  height: 19px;
}
.node .ic {
  margin: 0;
}
.node span {
  margin-left: 3px;
}
.off {
  color: #a0a0a0;
}
.bold {
  font-weight: 700;
}
.lead {
  flex: none;
  fill: none;
  stroke: #999;
  stroke-dasharray: 1 1;
  shape-rendering: crispEdges;
}
.lead .box {
  fill: #fff;
  stroke: #ccc;
  stroke-dasharray: none;
}
.lead .sign {
  stroke: #000;
  stroke-dasharray: none;
}
.hscroll {
  flex: none;
  height: 17px;
  padding: 8px 60px 0 17px;
  border: 1px solid #d4d4d4;
  border-top: 0;
  background: #f0f0f0;
}
.hscroll i {
  display: block;
  height: 2px;
  background: #888;
}
.splitter {
  flex: none;
  height: 6px;
  margin: 2px 0 3px;
  border: 1px solid #a0a0a0;
  background: #dcdcdc;
}
.sections button {
  gap: 9px;
  width: 100%;
  height: 24px;
  padding: 3px 0 0 10px;
  border-bottom: 2px solid #d0d0d0;
  color: #006487;
  font-size: 14px;
  line-height: 20px;
}
.sections i {
  border: 4px solid transparent;
  border-left: 5px solid #006487;
  border-right: 0;
}
.work {
  display: flex;
  flex: 1;
  flex-direction: column;
  min-width: 0;
}
.doc-tabs {
  display: flex;
  flex: none;
  height: 27px;
  border-bottom: 2px solid #005f87;
}
.doc {
  display: flex;
  align-items: center;
  gap: 4px;
  width: 200px;
  padding: 0 6px;
  background: #005f87;
  color: #fff;
  font-size: 12px;
}
.doc span {
  flex: 1;
}
.doc > .ic {
  color: #222;
}
.doc button {
  color: #fff;
}
.canvas {
  flex: 1;
  min-height: 0;
  overflow: hidden;
  background: linear-gradient(#b3b4b5, #e6e7e8 70%);
}
.scene {
  display: block;
  width: 100%;
  height: 100%;
}
.axis {
  font: 13px 'Liberation Sans', sans-serif;
}

/* drop-down gallery */
.popup {
  position: absolute;
  left: 592px;
  top: 132px;
  display: grid;
  grid-template-columns: 1fr 17px;
  width: 378px;
  border: 1px solid #a0a0a0;
  background: #fff;
}
.popup-body {
  padding: 1px 0 0 1px;
}
.popup-body section {
  border-top: 1px solid #d9d9d9;
}
.popup h3 {
  height: 22px;
  padding-left: 6px;
  color: #006487;
  font-size: 13px;
  line-height: 21px;
}
.items {
  display: grid;
  grid-template-columns: repeat(3, 119px);
}
.items button {
  gap: 4px;
  height: 22px;
  padding-left: 2px;
  color: #1a1a1a;
}
.items .off {
  color: #c4c4c4;
}
.items .hot {
  background: #d6eaef;
}
.items .ic {
  color: #444;
}
.popup-scroll {
  display: flex;
  flex-direction: column;
  justify-content: space-between;
  align-items: center;
  padding: 7px 0 6px;
}
.tri {
  border: 4px solid transparent;
  border-top: 5px solid #111;
  border-bottom: 0;
}
.tri.up {
  border-top: 0;
  border-bottom: 5px solid #111;
}
.popup-foot {
  display: flex;
  grid-column: 1 / -1;
  align-items: flex-end;
  justify-content: flex-end;
  height: 11px;
  padding: 1px;
  background: #dcdcdc;
}
.frame {
  position: absolute;
  left: 704px;
  top: 399px;
  width: 135px;
  height: 29px;
  border: 3px solid #f00000;
  box-shadow: 2px 3px 4px rgba(0, 0, 0, 0.5), inset 2px 3px 4px rgba(0, 0, 0, 0.4);
}
.tip {
  position: absolute;
  left: 793px;
  top: 436px;
  display: flex;
  gap: 4px;
  width: 369px;
  height: 72px;
  padding: 6px;
  border: 1px solid #a0a0a0;
  background: #fff;
  font-size: 12px;
  line-height: 17px;
  white-space: nowrap;
}
.tip b {
  display: block;
  padding: 1px 0 5px;
}
.badge {
  position: absolute;
  width: 24px;
  height: 24px;
  border: 3px solid #fff;
  border-radius: 50%;
  background: #0000fa;
  box-shadow: 1px 2px 4px rgba(0, 0, 0, 0.7);
  color: #fff;
  font: 14px/18px 'DejaVu Sans', sans-serif;
  text-align: center;
}
.one {
  left: 599px;
  top: 107px;
}
.two {
  left: 670px;
  top: 400px;
}
.ime {
  position: absolute;
  right: 0;
  bottom: 13px;
  display: flex;
  align-items: center;
  gap: 8px;
  width: 190px;
  height: 26px;
  padding-right: 4px;
  justify-content: flex-end;
  border: 1px solid #b9cdee;
  background: #fff;
  color: #0068d6;
}
.ime b {
  font-size: 15px;
}
.ime .punct {
  width: 16px;
}
.sogou {
  position: absolute;
  left: -11px;
  top: -3px;
  width: 27px;
  height: 28px;
  border-radius: 5px;
  background: #f4511e;
  color: #fff;
  font: 700 30px/28px 'Liberation Sans', sans-serif;
  text-align: center;
  transform: rotate(-8deg);
}
.mark {
  position: absolute;
  right: 6px;
  bottom: 10px;
  color: rgba(235, 235, 235, 0.75);
  font: 300 37px/44px Roboto, 'Noto Sans CJK SC', sans-serif;
  text-shadow: 1px 1px 1px rgba(90, 90, 90, 0.7);
  white-space: nowrap;
}
</style>
